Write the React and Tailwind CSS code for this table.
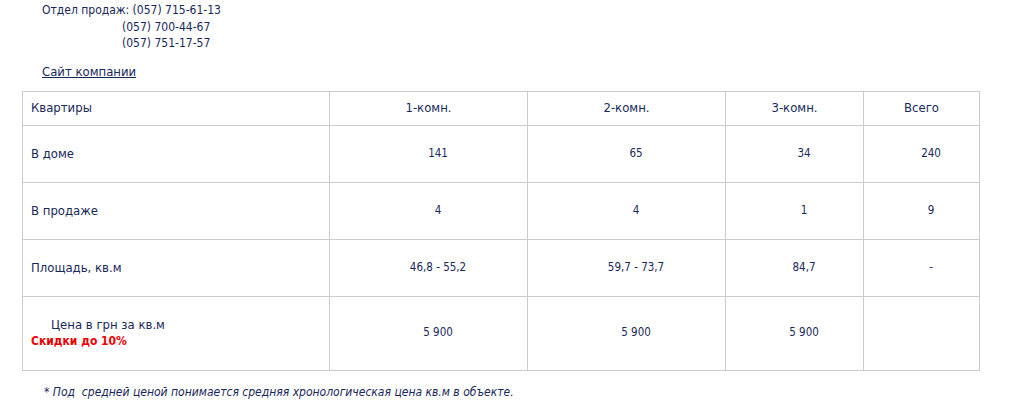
export default function App() {
  const font = { fontFamily: '"DejaVu Sans Condensed", "DejaVu Sans", Tahoma, sans-serif' };
  const td = "border border-[#cccccc] p-0";
  const dataCell = `${td} text-center text-[11.5px] pl-[19px]`;
  return (
    <div className="bg-white text-[#18285a] w-[1012px] h-[411px]" style={font}>
      <div className="pt-[2px] pl-[42px] text-[12px] leading-[16.5px]">
        <div>Отдел продаж: (057) 715-61-13</div>
        <div className="pl-[80px]">(057) 700-44-67</div>
        <div className="pl-[80px]">(057) 751-17-57</div>
      </div>
      <div className="pl-[42px] mt-[12px] text-[13px] leading-[16px]">
        <a href="#" className="underline text-[#18285a]">Сайт компании</a>
      </div>
      <table className="ml-[22px] mt-[11px] border-collapse text-[13px]" style={{ width: 958 }}>
        <colgroup>
          <col style={{ width: 307 }} />
          <col style={{ width: 198 }} />
          <col style={{ width: 198 }} />
          <col style={{ width: 138 }} />
          <col style={{ width: 116 }} />
        </colgroup>
        <tbody>
          <tr className="h-[34px]">
            <td className={`${td} pl-[8px]`}>Квартиры</td>
            <td className={`${td} text-center`}>1-комн.</td>
            <td className={`${td} text-center`}>2-комн.</td>
            <td className={`${td} text-center`}>3-комн.</td>
            <td className={`${td} text-center`}>Всего</td>
          </tr>
          <tr className="h-[57px]">
            <td className={`${td} pl-[8px]`}>В доме</td>
            <td className={dataCell}>141</td>
            <td className={dataCell}>65</td>
            <td className={dataCell}>34</td>
            <td className={dataCell}>240</td>
          </tr>
          <tr className="h-[57px]">
            <td className={`${td} pl-[8px]`}>В продаже</td>
            <td className={dataCell}>4</td>
            <td className={dataCell}>4</td>
            <td className={dataCell}>1</td>
            <td className={dataCell}>9</td>
          </tr>
          <tr className="h-[57px]">
            <td className={`${td} pl-[8px]`}>Площадь, кв.м</td>
            <td className={dataCell}>46,8 - 55,2</td>
            <td className={dataCell}>59,7 - 73,7</td>
            <td className={dataCell}>84,7</td>
            <td className={dataCell}>-</td>
          </tr>
          <tr className="h-[74px]">
            <td className={`${td} pl-[8px]`}>
              <div className="pl-[20px] leading-[16px]">Цена в грн за кв.м</div>
              <div className="text-[12px] font-bold text-[#ee0000] leading-[16px]">Скидки до 10%</div>
            </td>
            <td className={dataCell}>5 900</td>
            <td className={dataCell}>5 900</td>
            <td className={dataCell}>5 900</td>
            <td className={dataCell}></td>
          </tr>
        </tbody>
      </table>
      <div className="pl-[44px] mt-[13px] text-[12px] italic leading-[16px]">
        *&nbsp;Под&nbsp;&nbsp;средней ценой понимается средняя хронологическая цена кв.м в объекте.
      </div>
    </div>
  );
}
